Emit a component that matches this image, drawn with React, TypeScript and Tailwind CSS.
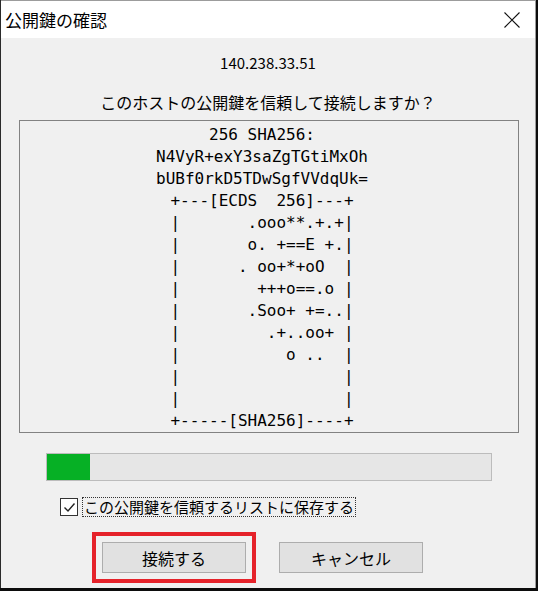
import { useState } from 'react';

const KEY_LINES = [
    '256 SHA256:',
    'N4VyR+exY3saZgTGtiMxOh',
    'bUBf0rkD5TDwSgfVVdqUk=',
    '+---[ECDS  256]---+',
    '|       .ooo**.+.+|',
    '|       o. +==E +.|',
    '|      . oo+*+oO  |',
    '|        +++o==.o |',
    '|       .Soo+ +=..|',
    '|         .+..oo+ |',
    '|           o ..  |',
    '|                 |',
    '|                 |',
    '+-----[SHA256]----+',
];

const uiFont = "font-['Noto_Sans_CJK_JP','Noto_Sans',sans-serif]";

const CloseIcon = () => (
    <svg width="16" height="16" viewBox="0 0 16 16" className="block">
        <path d="M0.5 0.5 L15.5 15.5 M15.5 0.5 L0.5 15.5" stroke="#111" strokeWidth="1.1" />
    </svg>
);

const CheckMark = () => (
    <svg width="13" height="13" viewBox="0 0 13 13" className="block">
        <path d="M1.5 6.5 L5 10 L11.5 2.5" fill="none" stroke="#222" strokeWidth="1.4" />
    </svg>
);

export default function App() {
    const [saveKey, setSaveKey] = useState(true);

    return (
        <div className={`h-[591px] w-[538px] bg-[#0c0c0c] pr-[2px] pb-[3px] ${uiFont}`}>
            <div className="flex h-full w-full flex-col border-r border-l border-r-[#9c9c9c] border-l-[#2a2a2a] bg-[#f0f0f0]">
                {/* title bar */}
                <div className="flex h-[38px] shrink-0 items-center justify-between border-t border-[#9c9c9c] bg-white pr-[15px] pl-[4px]">
                    <span className="text-[17px] leading-none text-black">公開鍵の確認</span>
                    <CloseIcon />
                </div>

                {/* body */}
                <div className="flex flex-1 flex-col items-start">
                    <div className="mt-[13px] w-full text-center text-[15px] leading-[24px] text-black">
                        140.238.33.51
                    </div>
                    <div className="mt-[15px] w-full text-center text-[16px] leading-[24px] text-black">
                        このホストの公開鍵を信頼して接続しますか？
                    </div>

                    <div className="mt-[6px] ml-[18px] w-[500px] border border-[#828282] pt-[3px] pr-[14px] font-['DejaVu_Sans_Mono',monospace] text-[16px] leading-[22px] text-black">
                        {KEY_LINES.map((line, i) => (
                            <div key={i} className="text-center whitespace-pre">
                                {line}
                            </div>
                        ))}
                    </div>

                    <div className="mt-[20px] ml-[45px] h-[28px] w-[446px] border border-[#bcbcbc] bg-[#e6e6e6]">
                        <div className="h-full w-[43px] bg-[#06b025]" />
                    </div>

                    <div className="mt-[16px] ml-[59px] flex items-center gap-[4px]">
                        <button
                            onClick={() => setSaveKey(!saveKey)}
                            className="flex h-[18px] w-[18px] items-center justify-center border border-[#333] bg-white"
                        >
                            {saveKey && <CheckMark />}
                        </button>
                        <span className="border border-dotted border-[#333] px-[1px] text-[15px] leading-[18px] text-black">
                            この公開鍵を信頼するリストに保存する
                        </span>
                    </div>

                    <div className="mt-[15px] ml-[91px] flex items-center gap-[23px]">
                        <div className="border-4 border-[#e5222a] p-[6px]">
                            <button className="h-[31px] w-[144px] border border-[#adadad] bg-[#e1e1e1] text-[16px] text-black">
                                接続する
                            </button>
                        </div>
                        <button className="h-[31px] w-[144px] border border-[#adadad] bg-[#e1e1e1] text-[16px] text-black">
                            キャンセル
                        </button>
                    </div>
                </div>
            </div>
        </div>
    );
}
